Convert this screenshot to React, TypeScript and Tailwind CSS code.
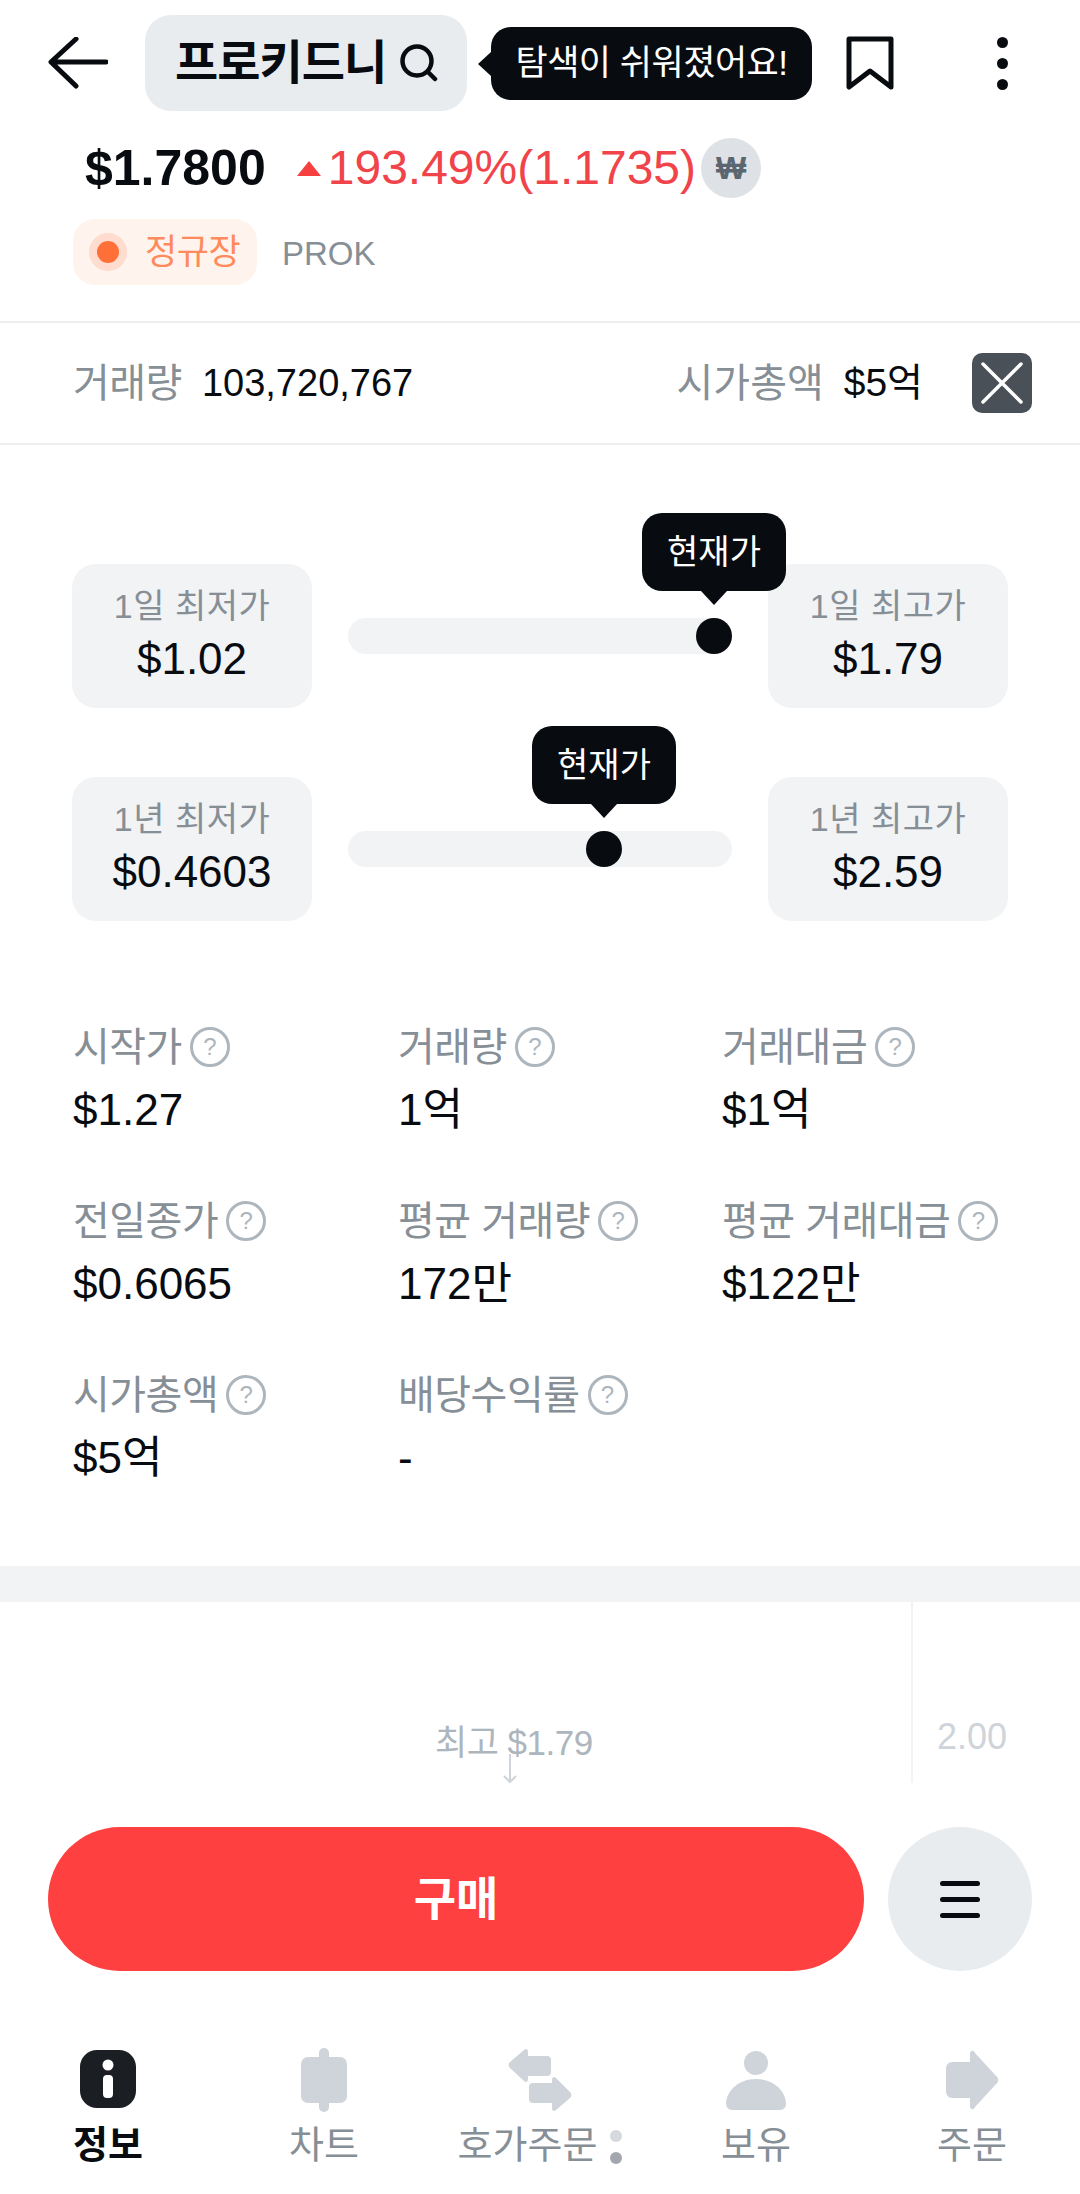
import React from "react";

const stats = [
  { label: "시작가", value: "$1.27" },
  { label: "거래량", value: "1억" },
  { label: "거래대금", value: "$1억" },
  { label: "전일종가", value: "$0.6065" },
  { label: "평균 거래량", value: "172만" },
  { label: "평균 거래대금", value: "$122만" },
  { label: "시가총액", value: "$5억" },
  { label: "배당수익률", value: "-" },
];

const RangeCard = ({ label, value }: { label: string; value: string }) => (
  <div className="w-[240px] h-[144px] rounded-[24px] bg-[#f1f3f5] flex flex-col items-center pt-[20px] shrink-0">
    <span className="text-[34px] leading-[44px] text-[#868e96] tracking-[0.5px]">{label}</span>
    <span className="text-[44px] leading-[56px] mt-[3px] text-[#080c10]">{value}</span>
  </div>
);

const RangeRow = ({ low, lowValue, high, highValue, pos }: { low: string; lowValue: string; high: string; highValue: string; pos: number }) => (
  <div className="flex items-center justify-between">
    <RangeCard label={low} value={lowValue} />
    <div className="relative z-10 w-[384px] h-[36px] rounded-full bg-[#f1f3f5]">
      <div className="absolute top-0 w-[36px] h-[36px] rounded-full bg-[#080c10]" style={{ left: pos }} />
      <div className="absolute top-[-105px] w-[144px] h-[78px] rounded-[20px] bg-[#080c10] flex items-center justify-center text-[34px] text-white" style={{ left: pos - 54 }}>
        현재가
        <div className="absolute bottom-[-14px] left-1/2 -ml-[13px] w-0 h-0 border-x-[13px] border-x-transparent border-t-[14px] border-t-[#080c10]" />
      </div>
    </div>
    <RangeCard label={high} value={highValue} />
  </div>
);

const Help = () => (
  <span className="ml-[8px] w-[40px] h-[40px] shrink-0 rounded-full border-[3px] border-[#adb5bd] text-[#adb5bd] text-[24px] flex items-center justify-center">?</span>
);

const NavItem = ({ label, active, badge, children }: { label: string; active?: boolean; badge?: boolean; children: React.ReactNode }) => (
  <div className="flex-1 flex flex-col items-center">
    <div className="h-[66px] w-full flex justify-center">{children}</div>
    <div className="mt-[6px] flex items-center">
      <span className={active ? "text-[38px] leading-[50px] font-bold text-[#080c10]" : "text-[38px] leading-[50px] text-[#868e96]"}>{label}</span>
      {badge && (
        <div className="ml-[13px] mt-[4px] flex flex-col gap-[10px]">
          <div className="w-[12px] h-[12px] rounded-full bg-[#d5d8dc]" />
          <div className="w-[12px] h-[12px] rounded-full bg-[#a3a7ad]" />
        </div>
      )}
    </div>
  </div>
);

export default function App() {
  return (
    <div className="w-[1080px] h-[2194px] bg-white overflow-hidden flex flex-col font-['Liberation_Sans','Noto_Sans_CJK_KR',sans-serif]">
      {/* Header */}
      <div className="flex items-center pt-[15px] pl-[48px] h-[111px]">
        <svg width="60" height="52" viewBox="0 0 60 52" fill="none" stroke="#080c10" strokeWidth="5" strokeLinecap="round" strokeLinejoin="round">
          <path d="M58 25H4M28 2 3 25l25 24" />
        </svg>
        <div className="ml-[37px] w-[322px] h-[96px] rounded-[26px] bg-[#e9ecef] flex items-center pl-[30px] shrink-0">
          <span className="text-[47px] font-bold text-[#080c10] tracking-[-1px]">프로키드니</span>
          <svg className="ml-[14px]" width="38" height="38" viewBox="0 0 38 38" fill="none" stroke="#080c10" strokeWidth="4.5" strokeLinecap="round">
            <circle cx="17" cy="17" r="14.5" />
            <path d="M28 28l7 7" />
          </svg>
        </div>
        <div className="relative ml-[24px] w-[321px] h-[73px] rounded-[20px] bg-[#080c10] flex items-center justify-center text-[35px] tracking-[-0.5px] text-white shrink-0">
          탐색이 쉬워졌어요!
          <div className="absolute left-[-13px] top-[25px] w-0 h-0 border-y-[12px] border-y-transparent border-r-[13px] border-r-[#080c10]" />
        </div>
        <svg className="ml-[34px]" width="48" height="54" viewBox="0 0 48 54" fill="none" stroke="#080c10" strokeWidth="5" strokeLinejoin="round">
          <path d="M3 3h42v48L24 35 3 51z" />
        </svg>
        <div className="ml-[103px] flex flex-col gap-[10px]">
          <div className="w-[11px] h-[11px] rounded-full bg-[#080c10]" />
          <div className="w-[11px] h-[11px] rounded-full bg-[#080c10]" />
          <div className="w-[11px] h-[11px] rounded-full bg-[#080c10]" />
        </div>
      </div>

      {/* Price */}
      <div className="flex items-center mt-[27px] pl-[85px] h-[60px]">
        <span className="text-[50px] font-bold text-[#080c10]">$1.7800</span>
        <div className="ml-[31px] w-0 h-0 border-x-[12px] border-x-transparent border-b-[15px] border-b-[#f5403f]" />
        <span className="ml-[7px] text-[48px] text-[#f0444a]">193.49%(1.1735)</span>
        <div className="ml-[5px] w-[60px] h-[60px] rounded-full bg-[#dee2e6] flex items-center justify-center text-[32px] font-bold text-[#5c6670]">₩</div>
      </div>

      {/* Market status */}
      <div className="flex items-center mt-[21px] pl-[73px] h-[66px]">
        <div className="w-[184px] h-[66px] rounded-[22px] bg-[#fff3ee] flex items-center pl-[16px]">
          <div className="w-[38px] h-[38px] rounded-full bg-[#ffdccd] flex items-center justify-center">
            <div className="w-[22px] h-[22px] rounded-full bg-[#ff7038]" />
          </div>
          <span className="ml-[18px] text-[35px] text-[#ff8a5c] tracking-[-0.5px]">정규장</span>
        </div>
        <span className="ml-[25px] mt-[3px] text-[33px] text-[#868e96]">PROK</span>
      </div>

      {/* Volume row */}
      <div className="mt-[36px] h-[124px] border-y-[2px] border-y-[#eceef0] flex items-center pl-[73px] pr-[48px]">
        <span className="text-[40px] text-[#868e96] tracking-[-0.5px]">거래량</span>
        <span className="ml-[20px] text-[38px] text-[#080c10]">103,720,767</span>
        <span className="ml-auto text-[40px] text-[#868e96]">시가총액</span>
        <span className="ml-[20px] text-[39px] text-[#080c10]">$5억</span>
        <div className="ml-[49px] w-[60px] h-[60px] rounded-[10px] bg-[#495057] flex items-center justify-center">
          <svg width="44" height="44" viewBox="0 0 44 44" fill="none" stroke="#fff" strokeWidth="3.5" strokeLinecap="round">
            <path d="M3 3l38 38M41 3 3 41" />
          </svg>
        </div>
      </div>

      {/* Range */}
      <div className="pt-[119px] px-[72px] flex flex-col gap-[69px]">
        <RangeRow low="1일 최저가" lowValue="$1.02" high="1일 최고가" highValue="$1.79" pos={348} />
        <RangeRow low="1년 최저가" lowValue="$0.4603" high="1년 최고가" highValue="$2.59" pos={238} />
      </div>

      {/* Stats */}
      <div className="mt-[101px] pl-[73px] pb-[22px] grid grid-cols-[325px_324px_1fr] auto-rows-[174px]">
        {stats.map((s) => (
          <div key={s.label}>
            <div className="flex items-center h-[50px]">
              <span className="text-[40px] text-[#868e96] tracking-[-0.5px]">{s.label}</span>
              <Help />
            </div>
            <div className="mt-[8px] h-[60px] flex items-center text-[44px] text-[#080c10]">{s.value}</div>
          </div>
        ))}
      </div>
      <div className="h-[36px] bg-[#f1f3f5] shrink-0" />

      {/* Chart peek */}
      <div className="relative h-[225px] shrink-0">
        <div className="absolute left-[911px] top-0 h-[181px] w-[2px] bg-[#f1f3f5]" />
        <span className="absolute left-[937px] top-[114px] text-[36px] leading-[42px] text-[#ced4da]">2.00</span>
        <span className="absolute left-[435px] top-[121px] text-[35px] leading-[40px] text-[#adb5bd] tracking-[-0.5px]">최고 $1.79</span>
        <svg className="absolute left-[502px] top-[152px]" width="16" height="30" viewBox="0 0 16 30" fill="none" stroke="#ced4da" strokeWidth="2">
          <path d="M8 0v28M2 22l6 6 6-6" />
        </svg>
      </div>

      {/* Buy */}
      <div className="flex gap-[24px] pl-[48px] h-[144px] shrink-0">
        <div className="w-[816px] h-[144px] rounded-full bg-[#ff4040] flex items-center justify-center text-[46px] font-bold text-white">구매</div>
        <div className="w-[144px] h-[144px] rounded-full bg-[#e9ecef] flex flex-col items-center justify-center gap-[11px]">
          <div className="w-[40px] h-[5px] rounded-full bg-[#080c10]" />
          <div className="w-[40px] h-[5px] rounded-full bg-[#080c10]" />
          <div className="w-[40px] h-[5px] rounded-full bg-[#080c10]" />
        </div>
      </div>

      {/* Bottom nav */}
      <div className="flex mt-[77px]">
        <NavItem label="정보" active>
          <svg className="mt-[2px]" width="56" height="58" viewBox="0 0 56 58">
            <rect width="56" height="58" rx="17" fill="#1b1e23" />
            <circle cx="28" cy="15" r="5.5" fill="#fff" />
            <rect x="23" y="25" width="10" height="23" rx="4" fill="#fff" />
          </svg>
        </NavItem>
        <NavItem label="차트">
          <svg width="46" height="64" viewBox="0 0 46 64" fill="#ced4da">
            <rect x="0" y="9" width="46" height="46" rx="7" />
            <rect x="18" y="0" width="10" height="64" rx="5" />
          </svg>
        </NavItem>
        <NavItem label="호가주문" badge>
          <svg width="64" height="64" viewBox="0 0 64 64" fill="#ced4da">
            <path d="M16 2c2-2 4-1 4 2v4h19a4 4 0 0 1 4 4v12a4 4 0 0 1-4 4H20v3c0 3-2 4-4 2L2 20a4 4 0 0 1 0-6z" />
            <path d="M48 62c-2 2-4 1-4-2v-5H25a4 4 0 0 1-4-4V39a4 4 0 0 1 4-4h19v-3c0-3 2-4 4-2l14 14a4 4 0 0 1 0 6z" />
          </svg>
        </NavItem>
        <NavItem label="보유">
          <svg className="mt-[2px]" width="60" height="60" viewBox="0 0 60 60" fill="#ced4da">
            <circle cx="30" cy="13" r="12" />
            <path d="M30 29c17 0 29 11 30 24 0 4-2 7-6 7H6c-4 0-6-3-6-7 1-13 13-24 30-24z" />
          </svg>
        </NavItem>
        <NavItem label="주문">
          <svg className="mt-[2px]" width="52" height="60" viewBox="0 0 52 60" fill="#ced4da">
            <path d="M24 3c1-3 4-3 5 0l22 24a4 4 0 0 1 0 6L29 57c-1 3-4 3-5 0v-9H6a6 6 0 0 1-6-6V18a6 6 0 0 1 6-6h18z" />
          </svg>
        </NavItem>
      </div>
    </div>
  );
}
